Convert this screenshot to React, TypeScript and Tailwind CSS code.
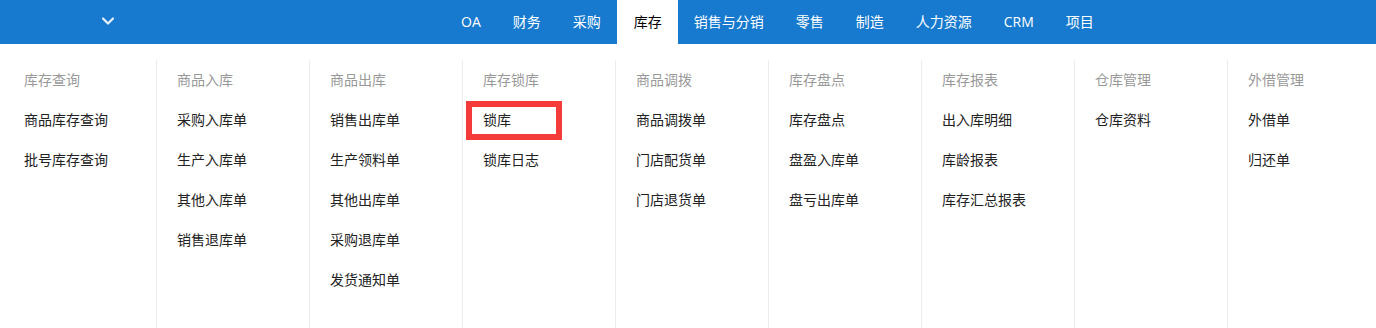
import { ChevronDown } from "lucide-react";

const navItems = ["OA", "财务", "采购", "库存", "销售与分销", "零售", "制造", "人力资源", "CRM", "项目"];

const columns = [
  { title: "库存查询", items: ["商品库存查询", "批号库存查询"] },
  { title: "商品入库", items: ["采购入库单", "生产入库单", "其他入库单", "销售退库单"] },
  { title: "商品出库", items: ["销售出库单", "生产领料单", "其他出库单", "采购退库单", "发货通知单"] },
  { title: "库存锁库", items: ["锁库", "锁库日志"] },
  { title: "商品调拨", items: ["商品调拨单", "门店配货单", "门店退货单"] },
  { title: "库存盘点", items: ["库存盘点", "盘盈入库单", "盘亏出库单"] },
  { title: "库存报表", items: ["出入库明细", "库龄报表", "库存汇总报表"] },
  { title: "仓库管理", items: ["仓库资料"] },
  { title: "外借管理", items: ["外借单", "归还单"] },
];

export default function App() {
  return (
    <div
      className="h-[328px] w-[1376px] overflow-hidden bg-white text-sm"
      style={{ fontFamily: '"Open Sans", "Noto Sans CJK SC", sans-serif' }}
    >
      {/* Top nav */}
      <div className="flex h-[44px] items-center bg-[#177ace]">
        <div className="flex w-[445px] pl-[98px] pb-[2px] text-[#e8f1fa]">
          <ChevronDown size={20} strokeWidth={2.6} />
        </div>
        <nav className="flex h-full">
          {navItems.map((item) => (
            <a
              key={item}
              href="#"
              className={
                item === "库存"
                  ? "flex h-full items-center bg-white pl-[17px] pr-4 text-black"
                  : "flex h-full items-center px-4 text-white"
              }
            >
              {item}
            </a>
          ))}
        </nav>
      </div>

      {/* Dropdown */}
      <div className="flex pl-[3px] pt-4">
        {columns.map((col, i) => (
          <div
            key={col.title}
            className={
              i === 0
                ? "h-[300px] w-[153px] shrink-0 pl-[21px]"
                : "h-[300px] w-[153px] shrink-0 border-l border-[#ececec] pl-5"
            }
          >
            <div className="flex h-10 items-center text-[#999]">{col.title}</div>
            {col.items.map((item) => (
              <div key={item} className="relative flex h-10 items-center text-[#222]">
                {item === "锁库" && (
                  <span className="absolute top-[1px] left-[-17px] h-[39px] w-[96px] border-[6px] border-[#f53a3a]" />
                )}
                <a href="#" className="relative">
                  {item}
                </a>
              </div>
            ))}
          </div>
        ))}
      </div>
    </div>
  );
}
